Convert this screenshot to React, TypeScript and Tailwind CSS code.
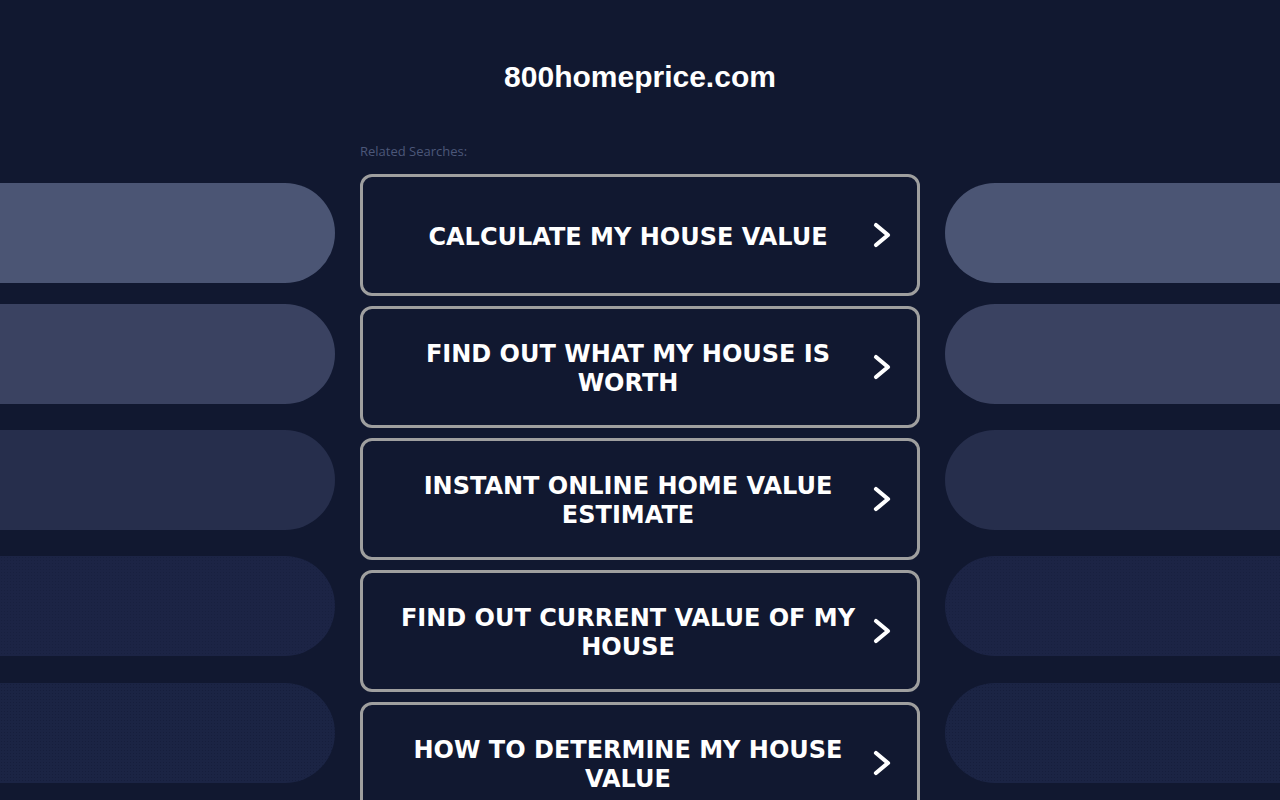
import React from 'react';

const searches = [
  'Calculate My House Value',
  'Find Out What My House Is Worth',
  'Instant Online Home Value Estimate',
  'Find Out Current Value of My House',
  'How to Determine My House Value',
];

const pills = [
  'mt-[183px] bg-[#4b5574]',
  'mt-[21px] bg-[#3a4261]',
  'mt-[26px] bg-[#262e4c]',
  'mt-[26px] bg-[#1c2445] bg-[radial-gradient(#18203f_0.6px,transparent_0.8px)] bg-[length:3px_3px]',
  'mt-[27px] bg-[#1b2444] bg-[radial-gradient(#161e3c_0.6px,transparent_0.8px)] bg-[length:3px_3px]',
];

function Chevron() {
  return (
    <svg width="18" height="26" viewBox="0 0 18 26" fill="none" aria-hidden="true" className="shrink-0">
      <polyline points="3,3 15,13 3,23" stroke="#ffffff" strokeWidth="4.2" strokeLinecap="round" strokeLinejoin="round" />
    </svg>
  );
}

export default function App() {
  return (
    <div className="flex h-[800px] w-[1280px] overflow-hidden bg-[#111830]">
      {/* left decoration */}
      <div className="flex w-[335px] shrink-0 flex-col">
        {pills.map((cls, i) => (
          <div key={i} className={`h-[100px] w-full shrink-0 rounded-r-[50px] ${cls}`} />
        ))}
      </div>

      <div className="mx-[25px] flex w-[560px] shrink-0 flex-col">
        <h1 className="mt-[59px] text-center font-['Liberation_Sans',Arial,sans-serif] text-[30px] font-bold leading-[36px] text-white">
          800homeprice.com
        </h1>
        <p className="mt-[47px] font-['Open_Sans',Arial,sans-serif] text-[13px] leading-[18px] text-[#4c5779]">
          Related Searches:
        </p>
        <div className="mt-[14px] flex flex-col gap-[10px]">
          {searches.map((s) => (
            <a
              key={s}
              href="#"
              className="flex h-[122px] shrink-0 items-center rounded-[12px] border-[3px] border-[#9f9f9f] bg-[#111830] pl-[30px] pr-[26px]"
            >
              <span className="flex-1 pt-[4px] text-center font-['DejaVu_Sans',Verdana,sans-serif] text-[24px] font-bold uppercase leading-[29px] text-white">
                {s}
              </span>
              <span className="ml-[10px]">
                <Chevron />
              </span>
            </a>
          ))}
        </div>
      </div>

      {/* right decoration */}
      <div className="flex flex-1 flex-col">
        {pills.map((cls, i) => (
          <div key={i} className={`h-[100px] w-full shrink-0 rounded-l-[50px] ${cls}`} />
        ))}
      </div>
    </div>
  );
}
